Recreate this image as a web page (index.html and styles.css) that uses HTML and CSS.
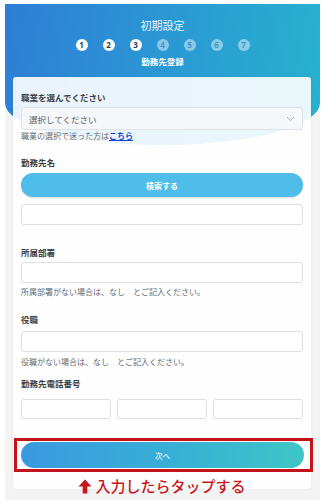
FILE: index.html
```html
<!DOCTYPE html>
<html lang="ja">
<head>
<meta charset="utf-8">
<link rel="stylesheet" href="styles.css">
</head>
<body>
<div class="page">
  <header class="hero">
    <div class="hero-title">初期設定</div>
    <ol class="steps">
      <li class="step done">1</li>
      <li class="step done">2</li>
      <li class="step done">3</li>
      <li class="step">4</li>
      <li class="step">5</li>
      <li class="step">6</li>
      <li class="step">7</li>
    </ol>
    <div class="hero-sub">勤務先登録</div>
  </header>
  <main class="card">
    <div class="label first">職業を選んでください</div>
    <div class="select">
      <span>選択してください</span>
      <svg class="chev" width="9" height="6" viewBox="0 0 9 6"><path d="M1 1l3.5 3.5L8 1" fill="none" stroke="#a9b1bb" stroke-width="1"/></svg>
    </div>
    <div class="hint">職業の選択で迷った方は<a class="link" href="#">こちら</a></div>

    <div class="label l2">勤務先名</div>
    <div class="btn-search">検索する</div>
    <div class="input i1"></div>

    <div class="label l3">所属部署</div>
    <div class="input"></div>
    <div class="hint h2">所属部署がない場合は、なし　とご記入ください。</div>

    <div class="label l4">役職</div>
    <div class="input"></div>
    <div class="hint h3">役職がない場合は、なし　とご記入ください。</div>

    <div class="label l5">勤務先電話番号</div>
    <div class="phones">
      <div class="input ph"></div>
      <div class="input ph"></div>
      <div class="input ph"></div>
    </div>

    <div class="mark">
      <div class="btn-next">次へ</div>
    </div>
    <div class="note">
      <svg class="arrow" width="14" height="15" viewBox="0 0 14 15"><path d="M7 0.5L13.5 7.5H9.3V14.5H4.7V7.5H0.5Z" fill="#c8161d"/></svg>
      <span>入力したらタップする</span>
    </div>
  </main>
</div>
</body>
</html>
```

FILE: styles.css
```css
* { box-sizing: border-box; }
html, body { margin: 0; padding: 0; background: #fff; }
body {
  font-family: "Noto Sans CJK JP", "Noto Sans", sans-serif;
  color: #333;
  width: 327px;
  height: 500px;
  overflow: hidden;
}
.page {
  margin: 4px 7px 0 5px;
  background: #f3f3f4;
  height: 496px;
}
.hero {
  height: 141px;
  background: linear-gradient(100deg, #2f7dd6 0%, #2a9bd3 55%, #27b3cf 100%);
  border-bottom-left-radius: 50% 42px;
  border-bottom-right-radius: 50% 42px;
  padding-top: 14px;
  color: #fff;
  text-align: center;
}
.hero-title {
  font-size: 11px;
  line-height: 14px;
  color: #e8f3fb;
}
.steps {
  list-style: none;
  margin: 7px 0 0;
  padding: 0;
  display: flex;
  justify-content: center;
  gap: 15px;
}
.step {
  width: 12px;
  height: 12px;
  border-radius: 50%;
  background: rgba(255, 255, 255, 0.45);
  color: rgba(40, 130, 200, 0.75);
  font-size: 8px;
  font-weight: 700;
  line-height: 12px;
  text-align: center;
  font-family: "Open Sans", "Noto Sans", sans-serif;
}
.step.done {
  background: #fff;
  color: #2c3a4a;
}
.hero-sub {
  margin-top: 4px;
  font-size: 8.5px;
  line-height: 12px;
  font-weight: 700;
}
.card {
  margin: -68px 9px 0 8px;
  background: rgba(255, 255, 255, 0.9);
  border-radius: 3px;
  box-shadow: 0 0 3px rgba(0, 0, 0, 0.06);
  padding: 14px 8px 0 8px;
  height: 412px;
  position: relative;
}
.label {
  font-size: 8.5px;
  line-height: 12px;
  font-weight: 700;
  color: #3a3f47;
}
.select {
  margin-top: 4px;
  height: 23px;
  background: #f5f7f9;
  border: 1px solid #dce2e8;
  border-radius: 3px;
  display: flex;
  align-items: center;
  justify-content: space-between;
  padding: 0 7px 0 7px;
  font-size: 8.5px;
  color: #555b63;
}
.hint {
  font-size: 8px;
  line-height: 12px;
  color: #666b72;
}
.link {
  color: #1a46d8;
  text-decoration: underline;
  font-weight: 700;
}
.l2 { margin-top: 14px; }
.btn-search {
  margin-top: 5px;
  height: 24px;
  border-radius: 12px;
  background: #4fbde9;
  color: #fff;
  font-size: 8px;
  font-weight: 700;
  display: flex;
  align-items: center;
  justify-content: center;
  box-shadow: 0 1px 2px rgba(0, 0, 0, 0.15);
}
.input {
  height: 21px;
  background: #fff;
  border: 1px solid #dcdfe3;
  border-radius: 3px;
}
.i1 { margin-top: 7px; }
.l3 { margin-top: 21px; margin-bottom: 4px; }
.h2 { margin-top: 3px; }
.l4 { margin-top: 15px; margin-bottom: 6px; }
.h3 { margin-top: 4px; }
.l5 { margin-top: 9px; margin-bottom: 10px; }
.phones {
  display: flex;
  gap: 6px;
}
.ph { flex: 1; height: 20px; }
.mark {
  margin: 19px -10px 0 -7px;
  border: 3px solid #c4121b;
  padding: 1px 6px 1px 4px;
}
.btn-next {
  height: 26px;
  border-radius: 13px;
  background: linear-gradient(90deg, #3a9ae0 0%, #38b0d6 55%, #3ec6c6 100%);
  color: #fff;
  font-size: 7.5px;
  display: flex;
  align-items: center;
  justify-content: center;
}
.note {
  margin-top: 5px;
  display: flex;
  align-items: center;
  justify-content: center;
  gap: 3px;
  color: #c8161d;
  font-size: 15px;
  line-height: 18px;
  font-weight: 500;
}
.arrow { display: block; }
```
